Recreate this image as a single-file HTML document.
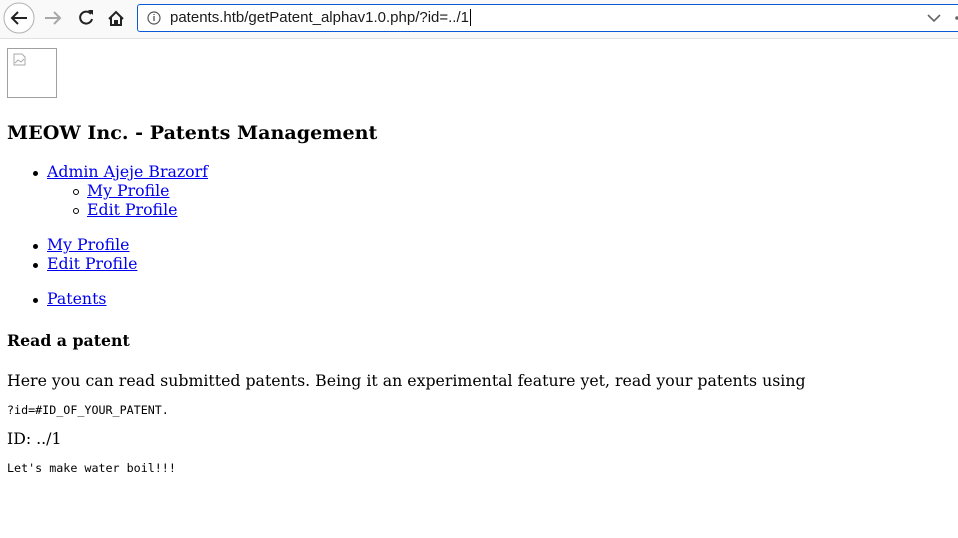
<!DOCTYPE html>
<html><head><meta charset="utf-8"><style>
body{margin:0;width:958px;height:538px;overflow:hidden;background:#fff;font-family:"DejaVu Serif",serif;font-size:15.75px;color:#000;position:relative}
.tb{position:absolute;left:0;top:0;width:958px;height:38px;background:#f9f9fa;border-bottom:1px solid #e0e0e2}
.url{position:absolute;left:137px;top:4px;width:840px;height:28px;border:1px solid #0a5ad6;border-radius:3px;background:#fff;box-sizing:border-box}
.u{position:absolute;left:170px;top:9px;font-family:"Liberation Sans",sans-serif;font-size:15px;color:#1a1a1a;white-space:nowrap}
.a{position:absolute;white-space:nowrap;line-height:19px}
a{color:#0000ee;text-decoration:underline}
.m{font-family:"DejaVu Sans Mono",monospace;font-size:11.7px}
.dot{position:absolute;width:5px;height:5px;border-radius:50%;background:#000}
.circ{position:absolute;border-radius:50%;border:1px solid #000;box-sizing:border-box;width:6px;height:6px}
</style></head><body>
<div class="tb">
<svg width="958" height="38" style="position:absolute;left:0;top:0">
<circle cx="19" cy="18" r="15" fill="#fff" stroke="#b1b1b3"/>
<path d="M27 18H12M18 12l-6 6 6 6" stroke="#222" stroke-width="2" fill="none"/>
<path d="M60 18H45M54 12l6 6-6 6" stroke="#a8a8a8" stroke-width="2" fill="none"/>
<path d="M91 14a6 6 0 1 0 1 5" stroke="#222" stroke-width="2" fill="none"/><path d="M88 10h5v5z" fill="#222"/>
<path d="M109 19l7-7 7 7M111 17v8h4v-4h2v4h4v-8" stroke="#222" stroke-width="2" fill="none"/>
</svg>
<div class="url"></div>
<svg width="958" height="38" style="position:absolute;left:0;top:0">
<circle cx="154" cy="18" r="6" fill="none" stroke="#555" stroke-width="1.2"/><path d="M154 16v5M154 14v1" stroke="#555" stroke-width="1.3"/>
<path d="M928 15l6 6 6-6" stroke="#666" stroke-width="1.6" fill="none"/>
<circle cx="957" cy="18" r="1.8" fill="#666"/>
</svg>
<div class="u">patents.htb/getPatent_alphav1.0.php/?id=../1<span style="border-left:1px solid #000;margin-left:1px"></span></div>
</div>
<div style="position:absolute;left:7px;top:48px;width:50px;height:50px;border:1px solid #a0a0a0;box-sizing:border-box"></div>
<svg width="14" height="14" style="position:absolute;left:13px;top:53px"><path d="M1 1h8l3 3v8H1z" fill="none" stroke="#aaa"/><path d="M2 10l3-3 3 2 3-3" stroke="#aaa" fill="none"/></svg>
<div class="a" style="left:7px;top:122px;font-weight:bold;font-size:19.1px;line-height:22px">MEOW Inc. - Patents Management</div>
<div class="dot" style="left:33px;top:171px"></div><div class="a" style="left:47px;top:162px"><a>Admin Ajeje Brazorf</a></div>
<div class="circ" style="left:73px;top:189px"></div><div class="a" style="left:87px;top:181px"><a>My Profile</a></div>
<div class="circ" style="left:73px;top:208px"></div><div class="a" style="left:87px;top:200px"><a>Edit Profile</a></div>
<div class="dot" style="left:33px;top:244px"></div><div class="a" style="left:47px;top:235px"><a>My Profile</a></div>
<div class="dot" style="left:33px;top:263px"></div><div class="a" style="left:47px;top:254px"><a>Edit Profile</a></div>
<div class="dot" style="left:33px;top:298px"></div><div class="a" style="left:47px;top:289px"><a>Patents</a></div>
<div class="a" style="left:7px;top:331px;font-weight:bold">Read a patent</div>
<div class="a" style="left:7px;top:371px">Here you can read submitted patents. Being it an experimental feature yet, read your patents using</div>
<div class="a m" style="left:7px;top:401px">?id=#ID_OF_YOUR_PATENT.</div>
<div class="a" style="left:7px;top:429px">ID: ../1</div>
<div class="a m" style="left:7px;top:459px">Let's make water boil!!!</div>
</body></html>
